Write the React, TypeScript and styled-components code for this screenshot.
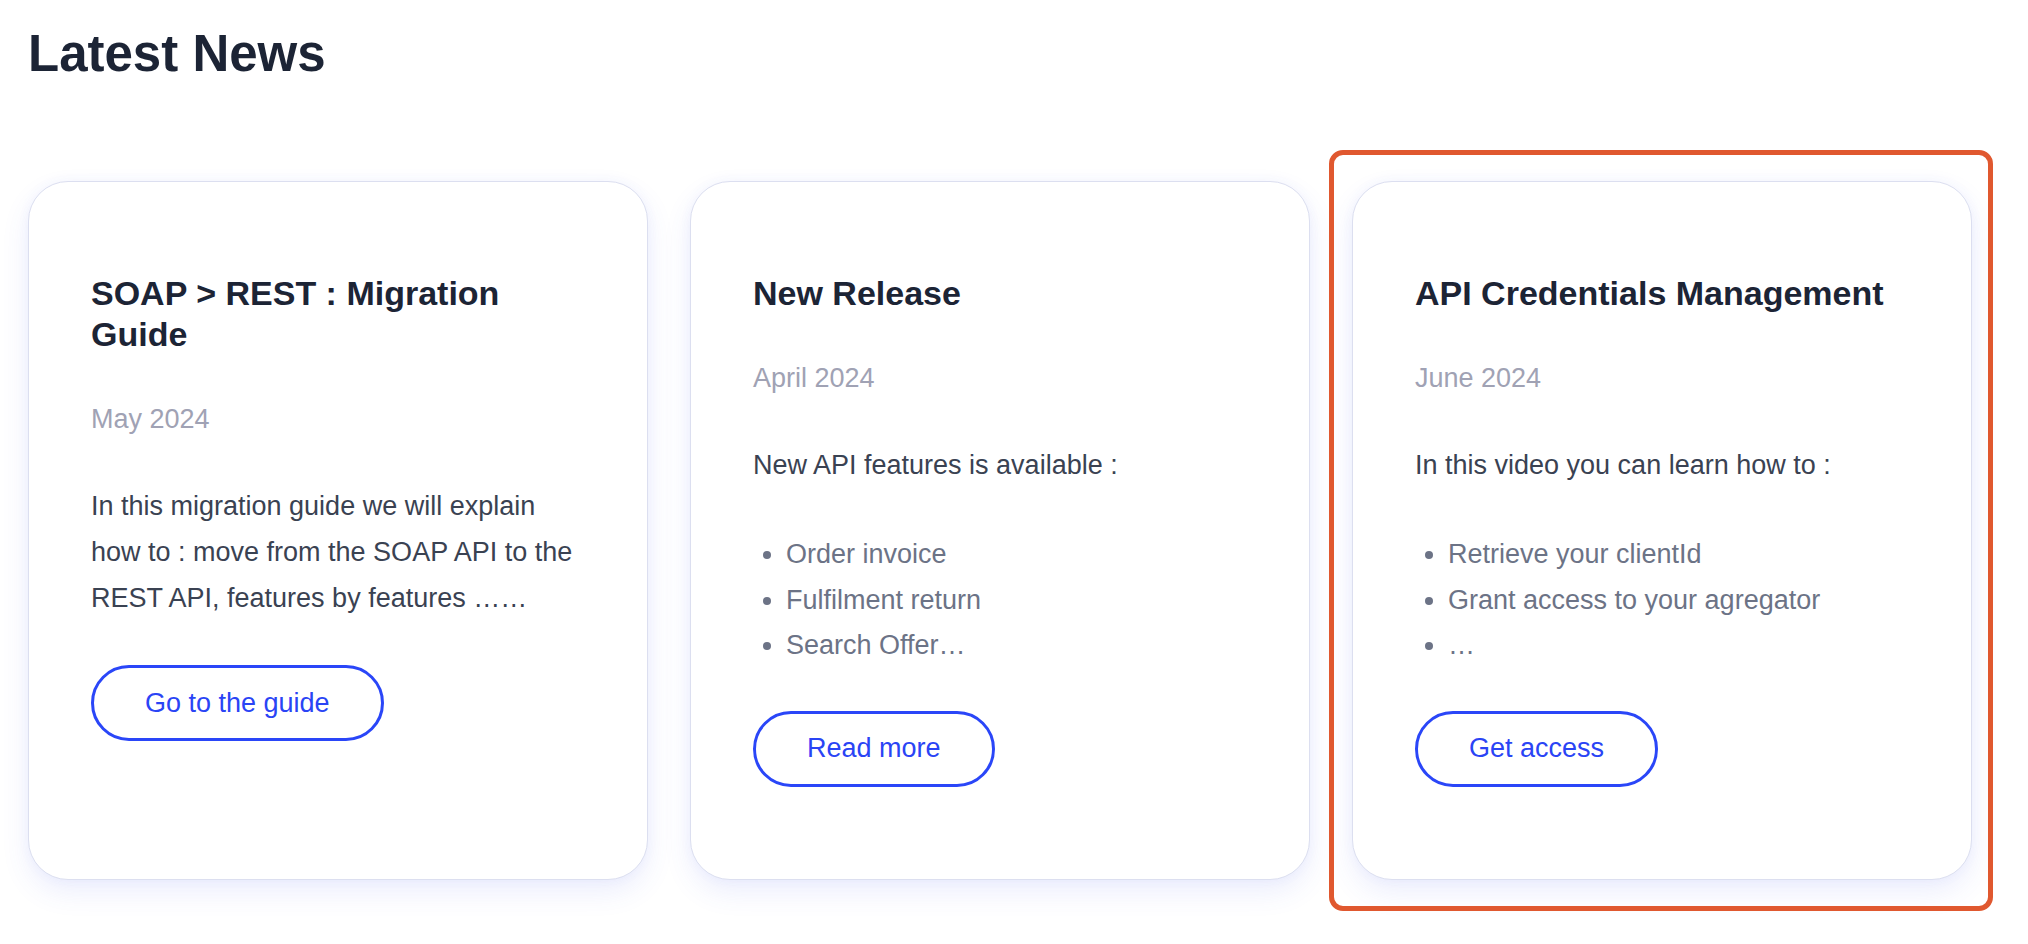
import React from "react";
import styled, { createGlobalStyle } from "styled-components";

const GlobalStyle = createGlobalStyle`
  html,
  body {
    margin: 0;
    padding: 0;
    background: #ffffff;
  }
  body {
    font-family: "Liberation Sans", Arial, Helvetica, sans-serif;
    -webkit-font-smoothing: antialiased;
  }
`;

type NewsItem = {
  title: string;
  date: string;
  text: string;
  bullets?: string[];
  action: string;
  highlighted?: boolean;
};

const news: NewsItem[] = [
  {
    title: "SOAP > REST : Migration Guide",
    date: "May 2024",
    text: "In this migration guide we will explain how to : move from the SOAP API to the REST API, features by features \u2026\u2026",
    action: "Go to the guide",
  },
  {
    title: "New Release",
    date: "April 2024",
    text: "New API features is available :",
    bullets: ["Order invoice", "Fulfilment return", "Search Offer\u2026"],
    action: "Read more",
  },
  {
    title: "API Credentials Management",
    date: "June 2024",
    text: "In this video you can learn how to :",
    bullets: ["Retrieve your clientId", "Grant access to your agregator", "\u2026"],
    action: "Get access",
    highlighted: true,
  },
];

const NewsCard = ({ item }: { item: NewsItem }) => (
  <Card $highlighted={item.highlighted}>
    <CardTitle>{item.title}</CardTitle>
    <CardDate>{item.date}</CardDate>
    <CardText>{item.text}</CardText>
    {item.bullets && (
      <BulletList>
        {item.bullets.map((b) => (
          <li key={b}>{b}</li>
        ))}
      </BulletList>
    )}
    <ActionButton type="button">{item.action}</ActionButton>
  </Card>
);

const App = () => {
  return (
    <Page>
      <GlobalStyle />
      <Heading>Latest News</Heading>
      <CardGrid>
        {news.map((item) => (
          <NewsCard key={item.title} item={item} />
        ))}
      </CardGrid>
    </Page>
  );
};

const Page = styled.main`
  padding: 24px 0 40px 28px;
`;

const Heading = styled.h1`
  margin: 0;
  font-size: 51px;
  line-height: 60px;
  font-weight: 700;
  color: #1c2435;
`;

const CardGrid = styled.section`
  margin-top: 97px;
  display: grid;
  grid-template-columns: repeat(3, 620px);
  column-gap: 42px;
`;

const Card = styled.article<{ $highlighted?: boolean }>`
  position: relative;
  box-sizing: border-box;
  height: 699px;
  padding: 91px 60px 0 62px;
  display: flex;
  flex-direction: column;
  align-items: flex-start;
  gap: 44px;
  background: #ffffff;
  border: 1px solid #dcdff0;
  border-radius: 40px;
  box-shadow: 0 12px 28px rgba(70, 90, 240, 0.1), 0 0 12px rgba(70, 90, 240, 0.05);

  /* orange focus frame drawn around the featured card */
  ${({ $highlighted }) =>
    $highlighted &&
    `
    &::after {
      content: "";
      position: absolute;
      top: -32px;
      bottom: -32px;
      left: -24px;
      right: -22px;
      border: 5px solid #e0582f;
      border-radius: 14px;
      pointer-events: none;
    }
  `}
`;

const CardTitle = styled.h2`
  margin: 0;
  font-size: 34px;
  line-height: 41px;
  font-weight: 700;
  color: #1c2435;
`;

const CardDate = styled.p`
  margin: 0;
  font-size: 27px;
  line-height: 40px;
  color: #a0a2b4;
`;

const CardText = styled.p`
  margin: 0;
  font-size: 27px;
  line-height: 46px;
  color: #3a4252;
`;

const BulletList = styled.ul`
  margin: 0 0 -2px;
  padding-left: 33px;
  font-size: 27px;
  line-height: 45.5px;
  color: #6c7386;

  li::marker {
    color: #6c7386;
  }
`;

const ActionButton = styled.button`
  box-sizing: border-box;
  height: 76px;
  padding: 0 51px;
  border: 3px solid #2a46f8;
  border-radius: 999px;
  background: #ffffff;
  font-family: inherit;
  font-size: 27px;
  color: #2a44f5;
  cursor: pointer;
`;

export default App;
